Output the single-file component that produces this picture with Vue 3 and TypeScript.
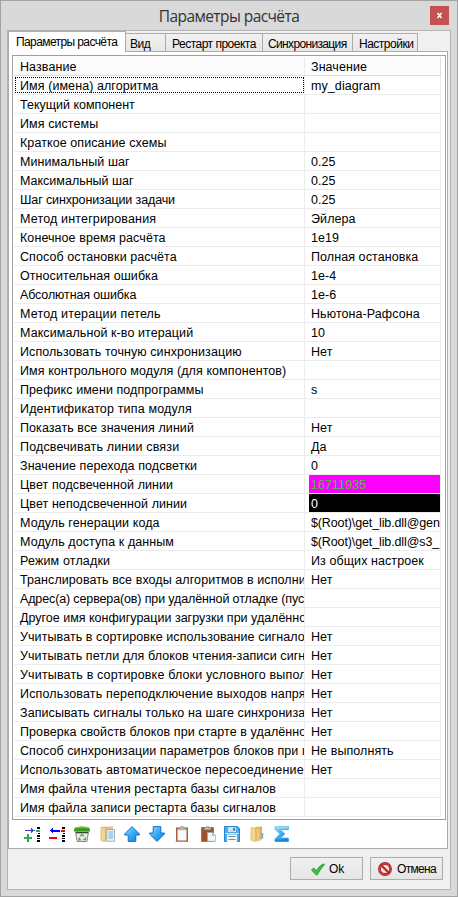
<script setup lang="ts">
interface Row {
  name: string
  value?: string
  tone?: string
}

const tabs: { label: string; cls: string }[] = [
  { label: 'Параметры расчёта', cls: 'active' },
  { label: 'Вид', cls: 't-view' },
  { label: 'Рестарт проекта', cls: 't-restart' },
  { label: 'Синхронизация', cls: 't-sync' },
  { label: 'Настройки', cls: 't-settings' },
]

const rows: Row[] = [
  { name: 'Имя (имена) алгоритма', value: 'my_diagram', tone: 'focused' },
  { name: 'Текущий компонент', tone: 'snug' },
  { name: 'Имя системы' },
  { name: 'Краткое описание схемы' },
  { name: 'Минимальный шаг', value: '0.25' },
  { name: 'Максимальный шаг', value: '0.25', tone: 'snug' },
  { name: 'Шаг синхронизации задачи', value: '0.25', tone: 'tight' },
  { name: 'Метод интегрирования', value: 'Эйлера', tone: 'wide' },
  { name: 'Конечное время расчёта', value: '1e19' },
  { name: 'Способ остановки расчёта', value: 'Полная остановка' },
  { name: 'Относительная ошибка', value: '1e-4' },
  { name: 'Абсолютная ошибка', value: '1e-6', tone: 'tight' },
  { name: 'Метод итерации петель', value: 'Ньютона-Рафсона', tone: 'wide' },
  { name: 'Максимальной к-во итераций', value: '10' },
  { name: 'Использовать точную синхронизацию', value: 'Нет' },
  { name: 'Имя контрольного модуля (для компонентов)' },
  { name: 'Префикс имени подпрограммы', value: 's' },
  { name: 'Идентификатор типа модуля', tone: 'wide' },
  { name: 'Показать все значения линий', value: 'Нет' },
  { name: 'Подсвечивать линии связи', value: 'Да', tone: 'wide' },
  { name: 'Значение перехода подсветки', value: '0' },
  { name: 'Цвет подсвеченной линии', value: '16711935', tone: 'magenta' },
  { name: 'Цвет неподсвеченной линии', value: '0', tone: 'black' },
  { name: 'Модуль генерации кода', value: '$(Root)\\get_lib.dll@gen', tone: 'path' },
  { name: 'Модуль доступа к данным', value: '$(Root)\\get_lib.dll@s3_', tone: 'path' },
  { name: 'Режим отладки', value: 'Из общих настроек', tone: 'wide' },
  { name: 'Транслировать все входы алгоритмов в исполни', value: 'Нет' },
  { name: 'Адрес(а) сервера(ов) при удалённой отладке (пус', tone: 'tight' },
  { name: 'Другое имя конфигурации загрузки при удалённо', tone: 'snug' },
  { name: 'Учитывать в сортировке использование сигнало', value: 'Нет' },
  { name: 'Учитывать петли для блоков чтения-записи сигн', value: 'Нет' },
  { name: 'Учитывать в сортировке блоки условного выпол', value: 'Нет', tone: 'wide' },
  { name: 'Использовать переподключение выходов напря', value: 'Нет', tone: 'wide' },
  { name: 'Записывать сигналы только на шаге синхрониза', value: 'Нет' },
  { name: 'Проверка свойств блоков при старте в удалённо', value: 'Нет' },
  { name: 'Способ синхронизации параметров блоков при п', value: 'Не выполнять' },
  { name: 'Использовать автоматическое пересоединение', value: 'Нет', tone: 'wide' },
  { name: 'Имя файла чтения рестарта базы сигналов' },
  { name: 'Имя файла записи рестарта базы сигналов' },
]
</script>

<template>
  <div class="window">
    <header class="titlebar">
      <span class="title">Параметры расчёта</span>
      <button class="close">
        <svg width="19" height="19" viewBox="0 0 19 19"><path d="M7.500 7L11.500 12M11.500 7L7.500 12" stroke="#fff" stroke-width="1.600" /></svg>
      </button>
    </header>
    <main class="client">
      <nav class="tabs">
        <span v-for="t in tabs" :key="t.label" class="tab" :class="t.cls">{{ t.label }}</span>
      </nav>
      <section class="page">
        <div class="grid">
          <div class="row head">
            <span class="name">Название</span>
            <span class="value">Значение</span>
          </div>
          <div v-for="r in rows" :key="r.name" class="row" :class="r.tone">
            <span class="name">{{ r.name }}</span>
            <span class="value">{{ r.value }}</span>
          </div>
        </div>
        <div class="tools">
          <svg class="i1" width="16" height="16" viewBox="0 0 16 16" shape-rendering="crispEdges">
            <path d="M1 4h6V2h1v1h1v1h2v1H9v1H8v1H7V5H1z" fill="#3f48cc" />
            <path d="M12 4h4v2h-4zM3 8h2v3h3v2H5v3H3v-3H0v-2h3z" fill="#22b14c" />
            <path d="M13 1h3v2h-3zM14 7h2v1h-2zM13 9h3v2h-3zM13 12h3v1h-3zM13 14h3v2h-3z" />
          </svg>
          <svg class="i2" width="16" height="16" viewBox="0 0 16 16" shape-rendering="crispEdges">
            <path d="M11 4H4V2H3v1H2v1H1v1h1v1h1v1h1V6h7z" fill="#00f" />
            <path d="M12 4h4v2h-4zM0 11h8v2H0z" fill="#f00" />
            <path d="M13 1h3v2h-3zM14 7h2v1h-2zM13 9h3v2h-3zM13 12h3v1h-3zM13 14h3v2h-3z" />
          </svg>
          <svg class="i3" width="16" height="16" viewBox="0 0 16 16">
            <path d="M1.500 6h13l-1.700 9.500H3.200z" fill="#ebebeb" stroke="#888" />
            <path d="M1 1.500Q8-.7 15 1.500L16 4v1.500H0V4z" fill="#3b9b18" />
            <path d="M1.500 2Q8 .2 14.500 2" stroke="#8bd653" fill="none" />
            <path d="M2 6h12v1.300H2z" fill="#3b423b" />
            <path d="M6.300 10.200L8 8.400l1.800 2M11 11.400l.6 2-2.400.4M7.200 13.800H4.700l1-2.300" fill="none" stroke="#4fb524" stroke-width="1.300" />
          </svg>
          <svg class="i4" width="16" height="16" viewBox="0 0 16 16">
            <path d="M1 1.500L5 .5h8v13L6 15l-5-.7z" fill="#e3c07c" />
            <path d="M1 1.300l4.400.8V16L1 14.400z" fill="#f2d795" stroke="#d0a45c" stroke-width=".6" />
            <path d="M6.800 3.500h7.700v11.800H6.800z" fill="#eaf5fa" stroke="#8fa5ae" stroke-width=".8" />
            <path d="M8.500 6h4.700M8.500 8h4.700M8.500 10h4.700M8.500 12h4.700" stroke="#67aed6" />
          </svg>
          <svg class="i5" width="16" height="16" viewBox="0 0 16 16">
            <defs>
              <linearGradient id="blue" x1="0" y1="0" x2="1" y2="1">
                <stop offset="0" stop-color="#9be3ff" /><stop offset=".5" stop-color="#35aaf5" /><stop offset="1" stop-color="#1377d7" />
              </linearGradient>
            </defs>
            <path d="M8 .6L15.400 8v1h-3.600v6.400H4.200V9H.6V8z" fill="url(#blue)" stroke="#1470c4" />
          </svg>
          <svg class="i6" width="16" height="16" viewBox="0 0 16 16">
            <path d="M8 15.400L15.400 8V7h-3.600V.6H4.200V7H.6v1z" fill="url(#blue)" stroke="#1470c4" />
          </svg>
          <svg class="i7" width="16" height="16" viewBox="0 0 16 16">
            <path d="M2 1.500h12V16H2z" fill="#a85f3c" />
            <path d="M3.500 3h9v11.500h-9z" fill="#f6faf9" />
            <path d="M4.500 3.800V2L7 1.500V.3h2v1.200l2.500.5v1.800z" fill="#b7b9bc" stroke="#8a817e" stroke-width=".5" />
            <path d="M.5 15.700h15" stroke="#bbb" stroke-width=".6" />
          </svg>
          <svg class="i8" width="16" height="16" viewBox="0 0 16 16">
            <path d="M1.500 1.500h12V15.500h-12z" fill="#9c532f" stroke="#7d3f22" stroke-width=".5" />
            <path d="M4 3.800V2L6.500 1.500V.3h2v1.200l2.500.5v1.800z" fill="#c3c3c5" stroke="#8a817e" stroke-width=".5" />
            <path d="M7.500 6.500h5l3 3v5.800h-8z" fill="#f1f8f7" stroke="#9bb0b0" stroke-width=".7" />
            <path d="M12.500 6.500v3h3" fill="#c4d8d6" stroke="#8fa9a8" stroke-width=".6" />
          </svg>
          <svg class="i9" width="16" height="16" viewBox="0 0 16 16">
            <path d="M.5 .5h13l2 2v13H.5z" fill="#4aaeea" stroke="#2384cd" />
            <path d="M4 1h8v5H4z" fill="#d3e0e9" /><path d="M9 1.800h2v3H9z" fill="#4383af" />
            <path d="M3 8.500h10V16H3z" fill="#f5f6f7" />
            <path d="M4.500 10.500h7M4.500 13.500h7" stroke="#7f8d99" />
            <path d="M1 7.500h14" stroke="#b7e7ff" />
          </svg>
          <svg class="i10" width="16" height="16" viewBox="0 0 16 16">
            <path d="M5 1l7-.5V13l-6 2z" fill="#dcb158" />
            <path d="M1 1.500l4.500.8V15.700L1 14z" fill="#f4d78c" stroke="#d5aa52" stroke-width=".6" />
            <path d="M6.500 2.500l3-.5v12l-3 1.500z" fill="#edcb7b" />
            <path d="M12.500 7v5.500" stroke="#55b5ef" stroke-width="1.500" />
            <path d="M7 15.500l5-2" stroke="#aaa" stroke-width=".5" />
          </svg>
          <svg class="i11" width="16" height="16" viewBox="0 0 16 16">
            <path d="M1 .5h13.500v3.200H6.500L11 8l-4.500 4H14.500v3.500H1v-3L6 8 1 3.500z" fill="url(#blue)" stroke="#57aee3" stroke-width=".7" />
            <path d="M1 .5h13.500v2H1z" fill="#9fd8f6" />
            <path d="M1 13.500h13.500v2H1z" fill="#1788d8" />
          </svg>
        </div>
      </section>
      <footer class="buttons">
        <button class="btn">
          <svg width="16" height="16" viewBox="0 0 16 16"><path d="M1.500 9L3.500 7l3 2.500Q9.500 4.500 13.500 2.800l1 .8Q10.500 8 7.300 13.800H6z" fill="#32c53c" stroke="#249b2d" stroke-width=".8" /></svg>
          <span class="ok">Ok</span>
        </button>
        <button class="btn cancel">
          <svg width="16" height="16" viewBox="0 0 16 16"><circle cx="8" cy="8" r="5.500" fill="#f4e9e9" stroke="#a91d22" stroke-width="2.800" /><circle cx="8" cy="8" r="5.500" fill="none" stroke="#d13b3e" stroke-width="1.600" /><path d="M4 4l8 8" stroke="#c2272b" stroke-width="2.400" /></svg>
          <span>Отмена</span>
        </button>
      </footer>
    </main>
  </div>
</template>

<style>
body {
  margin: 0;
}
</style>

<style scoped>
* {
  box-sizing: border-box;
}
.window {
  width: 458px;
  height: 897px;
  border: 1px solid #a3a3a3;
  background: #d9d9d9;
  padding: 0 6px;
  font: 12.5px/16px 'Liberation Sans', Arial, sans-serif;
  color: #000;
}
.titlebar {
  height: 29px;
  display: flex;
  justify-content: center;
  position: relative;
}
.title {
  font: 15.5px/20px 'Open Sans', 'Noto Sans', sans-serif;
  letter-spacing: -0.58px;
  color: #333;
  padding-top: 5px;
}
.close {
  position: absolute;
  right: 2px;
  top: 5px;
  width: 19px;
  height: 19px;
  background: #c75050;
  border: 0;
  padding: 0;
}
.close svg {
  display: block;
}
.client {
  height: 860px;
  width: 444px;
  border: 1px solid #b4b4b4;
  background: #f0f0f0;
}
.tabs {
  display: flex;
  align-items: flex-end;
  width: 440px;
  height: 21px;
  white-space: nowrap;
  font-size: 12px;
  letter-spacing: -0.5px;
}
.tabs::after {
  content: '';
  flex: 1;
  border-bottom: 1px solid #acacac;
}
.tab {
  flex: none;
  height: 19px;
  border: 1px solid #acacac;
  border-left: 0;
  background: linear-gradient(#f1f1f1, #e6e6e6);
  padding: 2px 0 0 4px;
}
.tab.active {
  width: 118px;
  height: 21px;
  background: #fff;
  border-left: 1px solid #acacac;
  border-bottom: 0;
  padding: 2px 0 0 7px;
  letter-spacing: -0.6px;
}
.t-view { width: 40px; }
.t-restart { width: 97px; padding-left: 6px; }
.t-sync { width: 90px; padding-left: 5px; letter-spacing: -0.65px; }
.t-settings { width: 65px; padding-left: 6px; }
.page {
  width: 440px;
  height: 797px;
  background: #fff;
  border: 1px solid #acacac;
  border-top: 0;
  padding: 3px 1px 0 3px;
}
.grid {
  width: 434px;
  height: 765px;
  border: 1px solid #a0a0a0;
  padding: 1px 0 0 1px;
  letter-spacing: 0.08px;
}
.row {
  width: 427px;
  height: 19px;
  display: flex;
  border-bottom: 1px solid #ececec;
  border-right: 1px solid #ececec;
}
.name,
.value {
  overflow: hidden;
  white-space: pre;
  height: 18px;
  line-height: 20px;
}
.name {
  width: 291px;
  border-right: 1px solid #ececec;
  padding-left: 6px;
}
.value {
  flex: 1;
  min-width: 0;
  margin-left: 4px;
  padding-left: 2px;
}
.head {
  background: #fcfcfc;
  border-color: #dfdfdf;
}
.tight .name {
  letter-spacing: -0.13px;
}
.snug .name {
  letter-spacing: 0;
}
.wide .name {
  letter-spacing: 0.16px;
}
.path .value {
  letter-spacing: -0.12px;
}
.focused .name {
  position: relative;
}
.focused .name::after {
  content: '';
  position: absolute;
  left: 1px;
  right: 0;
  top: 1px;
  bottom: 1px;
  border: 1px dotted #000;
}
.magenta .value {
  background: #f0f;
  color: #3fc03f;
}
.black .value {
  background: #000;
  color: #fff;
}
.tools {
  display: flex;
  padding: 6px 0 0 12px;
}
.tools svg {
  flex: none;
}
.i2, .i3, .i6 { margin-left: 9px; }
.i4, .i7, .i10 { margin-left: 10px; }
.i5, .i9, .i11 { margin-left: 8px; }
.i7 { margin-left: 9px; }
.i8 { margin-left: 10px; }
.buttons {
  display: flex;
  gap: 7px;
  padding: 8px 0 0 282px;
}
.btn {
  width: 73px;
  height: 23px;
  border: 1px solid #acacac;
  background: linear-gradient(#f0f0f0, #e5e5e5);
  display: flex;
  align-items: center;
  padding: 1px 0 0 19px;
  gap: 3px;
  font: inherit;
  font-size: 12px;
  letter-spacing: -0.7px;
}
.ok {
  letter-spacing: 0;
}
.btn.cancel {
  padding-left: 6px;
  gap: 4px;
}
</style>
